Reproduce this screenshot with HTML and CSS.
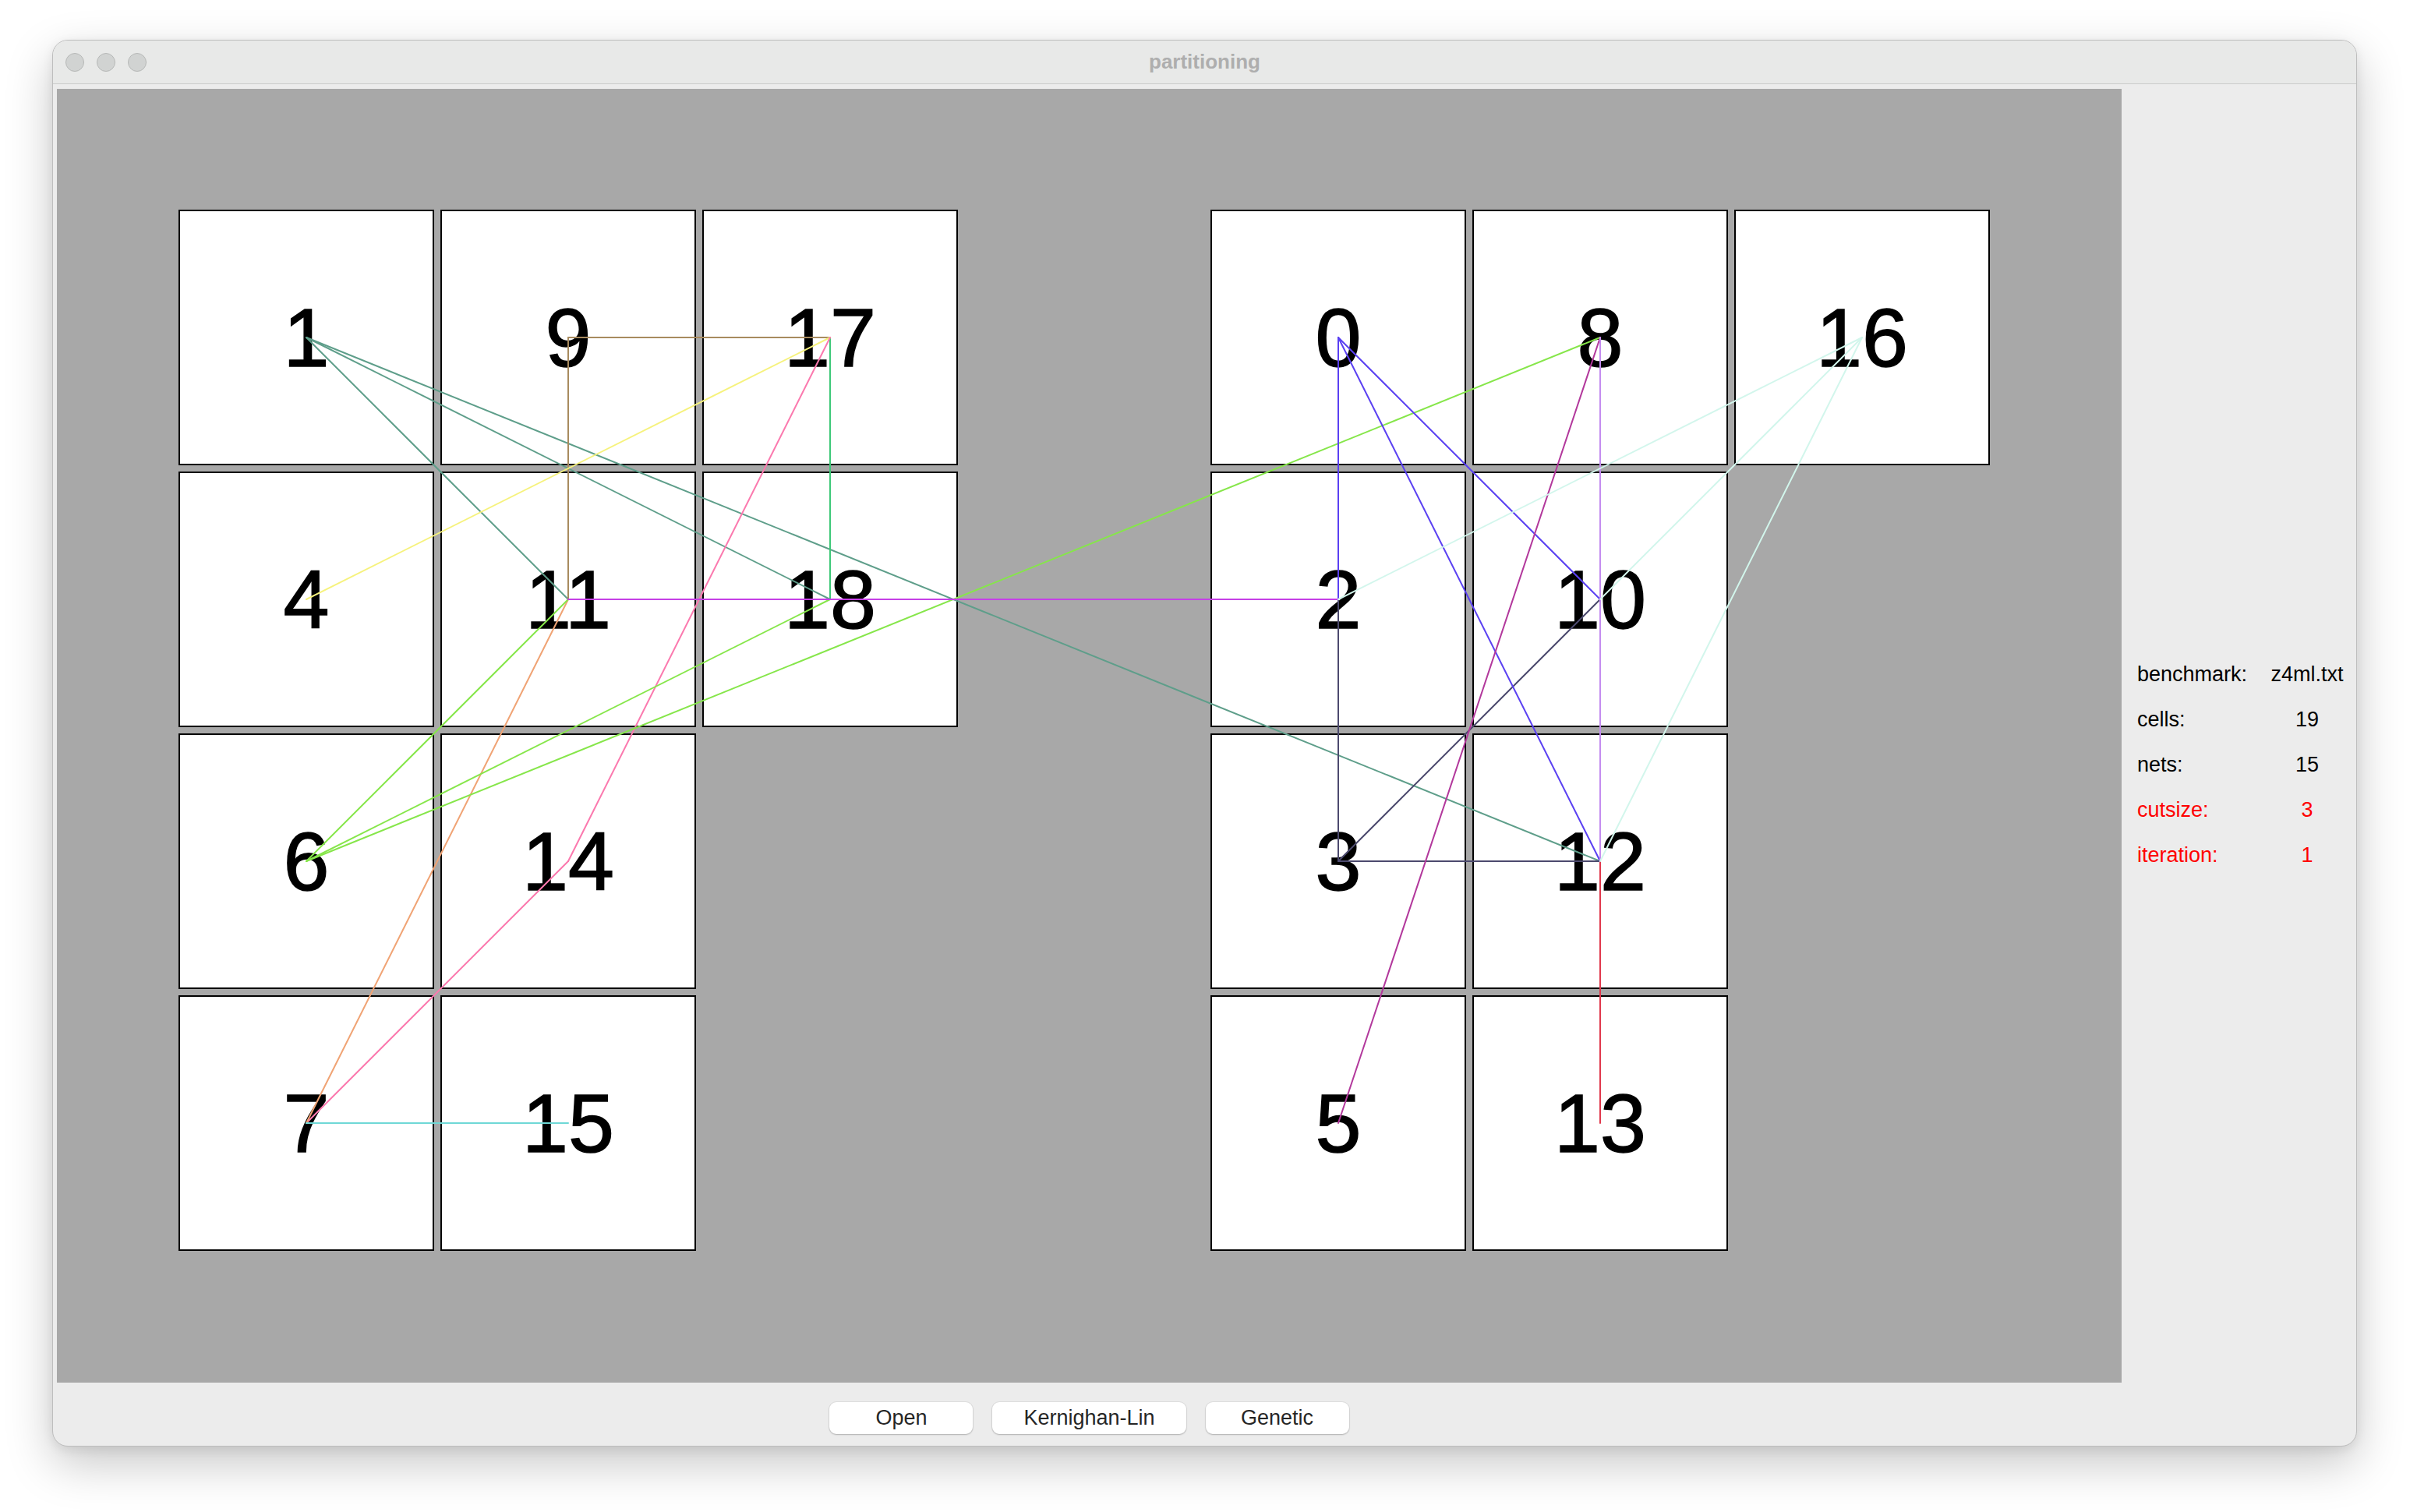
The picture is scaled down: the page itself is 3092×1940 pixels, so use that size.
FILE: index.html
```html
<!DOCTYPE html>
<html>
<head>
<meta charset="utf-8">
<title>partitioning</title>
<link rel="stylesheet" href="styles.css">
</head>
<body>
<div class="window">
  <div class="titlebar">
    <div class="lights"><span class="light"></span><span class="light"></span><span class="light"></span></div>
    <div class="title">partitioning</div>
    <div></div>
  </div>
  <div class="content">
    <div class="main">
      <div class="canvas">
        <div class="groups">
          <div class="group">
            <div class="cell">1</div><div class="cell">9</div><div class="cell">17</div>
            <div class="cell">4</div><div class="cell">11</div><div class="cell">18</div>
            <div class="cell">6</div><div class="cell">14</div><div class="empty"></div>
            <div class="cell">7</div><div class="cell">15</div><div class="empty"></div>
          </div>
          <div class="group">
            <div class="cell">0</div><div class="cell">8</div><div class="cell">16</div>
            <div class="cell">2</div><div class="cell">10</div><div class="empty"></div>
            <div class="cell">3</div><div class="cell">12</div><div class="empty"></div>
            <div class="cell">5</div><div class="cell">13</div><div class="empty"></div>
          </div>
        </div>
        <svg class="nets" width="2649" height="1660" viewBox="0 0 2649 1660">
          <g stroke-width="2" fill="none" stroke-linecap="round">
            <g stroke="#5e9e8a">
              <line x1="320" y1="319" x2="656" y2="655"/>
              <line x1="320" y1="319" x2="992" y2="655"/>
              <line x1="320" y1="319" x2="1980" y2="991"/>
            </g>
            <g stroke="#a88b5f">
              <line x1="656" y1="319" x2="992" y2="319"/>
              <line x1="656" y1="319" x2="656" y2="655"/>
            </g>
            <line stroke="#3ec878" x1="992" y1="319" x2="992" y2="655"/>
            <line stroke="#f6f27c" x1="992" y1="319" x2="320" y2="655"/>
            <g stroke="#fb79ae">
              <line x1="992" y1="319" x2="656" y2="991"/>
              <line x1="656" y1="991" x2="320" y2="1327"/>
            </g>
            <line stroke="#f0a374" x1="656" y1="655" x2="320" y2="1327"/>
            <g stroke="#86e64a">
              <line x1="320" y1="991" x2="656" y2="655"/>
              <line x1="320" y1="991" x2="992" y2="655"/>
              <line x1="320" y1="991" x2="1980" y2="319"/>
            </g>
            <line stroke="#c540e6" x1="656" y1="655" x2="1644" y2="655"/>
            <line stroke="#6fd8d6" x1="320" y1="1327" x2="656" y2="1327"/>
            <g stroke="#4c4a6e">
              <line x1="1644" y1="655" x2="1644" y2="991"/>
              <line x1="1644" y1="991" x2="1980" y2="655"/>
              <line x1="1644" y1="991" x2="1980" y2="991"/>
            </g>
            <g stroke="#5a40f2">
              <line x1="1644" y1="319" x2="1644" y2="655"/>
              <line x1="1644" y1="319" x2="1980" y2="655"/>
              <line x1="1644" y1="319" x2="1980" y2="991"/>
            </g>
            <line stroke="#b2389c" x1="1980" y1="319" x2="1644" y2="1327"/>
            <line stroke="#c48cf0" x1="1980" y1="319" x2="1980" y2="991"/>
            <line stroke="#e0384c" x1="1980" y1="991" x2="1980" y2="1327"/>
            <g stroke="#d2f6ec">
              <line x1="2316" y1="319" x2="1644" y2="655"/>
              <line x1="2316" y1="319" x2="1980" y2="655"/>
              <line x1="2316" y1="319" x2="1980" y2="991"/>
            </g>
          </g>
        </svg>
      </div>
      <div class="buttons">
        <button class="btn">Open</button>
        <button class="btn">Kernighan-Lin</button>
        <button class="btn">Genetic</button>
      </div>
    </div>
    <div class="info">
      <div class="stats">
        <div class="label">benchmark:</div><div class="value">z4ml.txt</div>
        <div class="label">cells:</div><div class="value">19</div>
        <div class="label">nets:</div><div class="value">15</div>
        <div class="label red">cutsize:</div><div class="value red">3</div>
        <div class="label red">iteration:</div><div class="value red">1</div>
      </div>
    </div>
  </div>
</div>
</body>
</html>
```
FILE: styles.css
```css
html, body {
  margin: 0;
  padding: 0;
  background: #ffffff;
}

body {
  font-family: "Liberation Sans", Arial, sans-serif;
  width: 3092px;
  height: 1940px;
  overflow: hidden;
}

.window {
  margin: 51px 0 0 67px;
  width: 2957px;
  height: 1805px;
  box-sizing: border-box;
  border: 1px solid #bdbdbd;
  border-radius: 20px;
  background: #ececec;
  box-shadow: 0 22px 60px rgba(0, 0, 0, 0.22), 0 4px 14px rgba(0, 0, 0, 0.08);
  overflow: hidden;
  display: flex;
  flex-direction: column;
}

.titlebar {
  height: 56px;
  box-sizing: border-box;
  border-bottom: 1px solid #cbcbcb;
  background: #e8e9e8;
  display: grid;
  grid-template-columns: 1fr auto 1fr;
  align-items: center;
}

.lights {
  display: flex;
  gap: 16px;
  padding-left: 16px;
}

.light {
  width: 24px;
  height: 24px;
  box-sizing: border-box;
  border-radius: 50%;
  background: #d1d3d2;
  border: 1px solid #b6b8b7;
}

.title {
  font-weight: bold;
  font-size: 26px;
  color: #aeaeae;
}

.content {
  flex: 1;
  display: flex;
}

.main {
  padding: 6px 0 0 5px;
  display: flex;
  flex-direction: column;
}

.canvas {
  position: relative;
  width: 2649px;
  height: 1660px;
  background: #a8a8a8;
}

.groups {
  display: flex;
  gap: 324px;
  padding: 155px 0 0 156px;
}

.group {
  display: grid;
  grid-template-columns: repeat(3, 328px);
  grid-auto-rows: 328px;
  gap: 8px;
}

.cell {
  background: #ffffff;
  border: 2px solid #000000;
  box-sizing: border-box;
  display: flex;
  align-items: center;
  justify-content: center;
  font-size: 106px;
  line-height: 1;
  color: #000000;
  -webkit-text-stroke: 1.5px #000000;
}

.nets {
  position: absolute;
  left: 0;
  top: 0;
}

.buttons {
  display: flex;
  justify-content: center;
  gap: 25px;
  padding-top: 25px;
}

.btn {
  font-family: "Liberation Sans", Arial, sans-serif;
  font-size: 27px;
  color: #262626;
  background: #ffffff;
  border: none;
  border-radius: 9px;
  height: 41px;
  min-width: 184px;
  padding: 0 40px;
  box-sizing: border-box;
  box-shadow: 0 1px 2px rgba(0, 0, 0, 0.22), 0 0 0 1px rgba(0, 0, 0, 0.05);
}

.info {
  flex: 1;
  display: flex;
  align-items: center;
  padding-left: 20px;
}

.stats {
  display: grid;
  grid-template-columns: 163px 110px;
  grid-auto-rows: 58px;
  align-items: center;
  font-size: 27px;
  color: #000000;
}

.value {
  text-align: center;
}

.red {
  color: #ff0000;
}
```
